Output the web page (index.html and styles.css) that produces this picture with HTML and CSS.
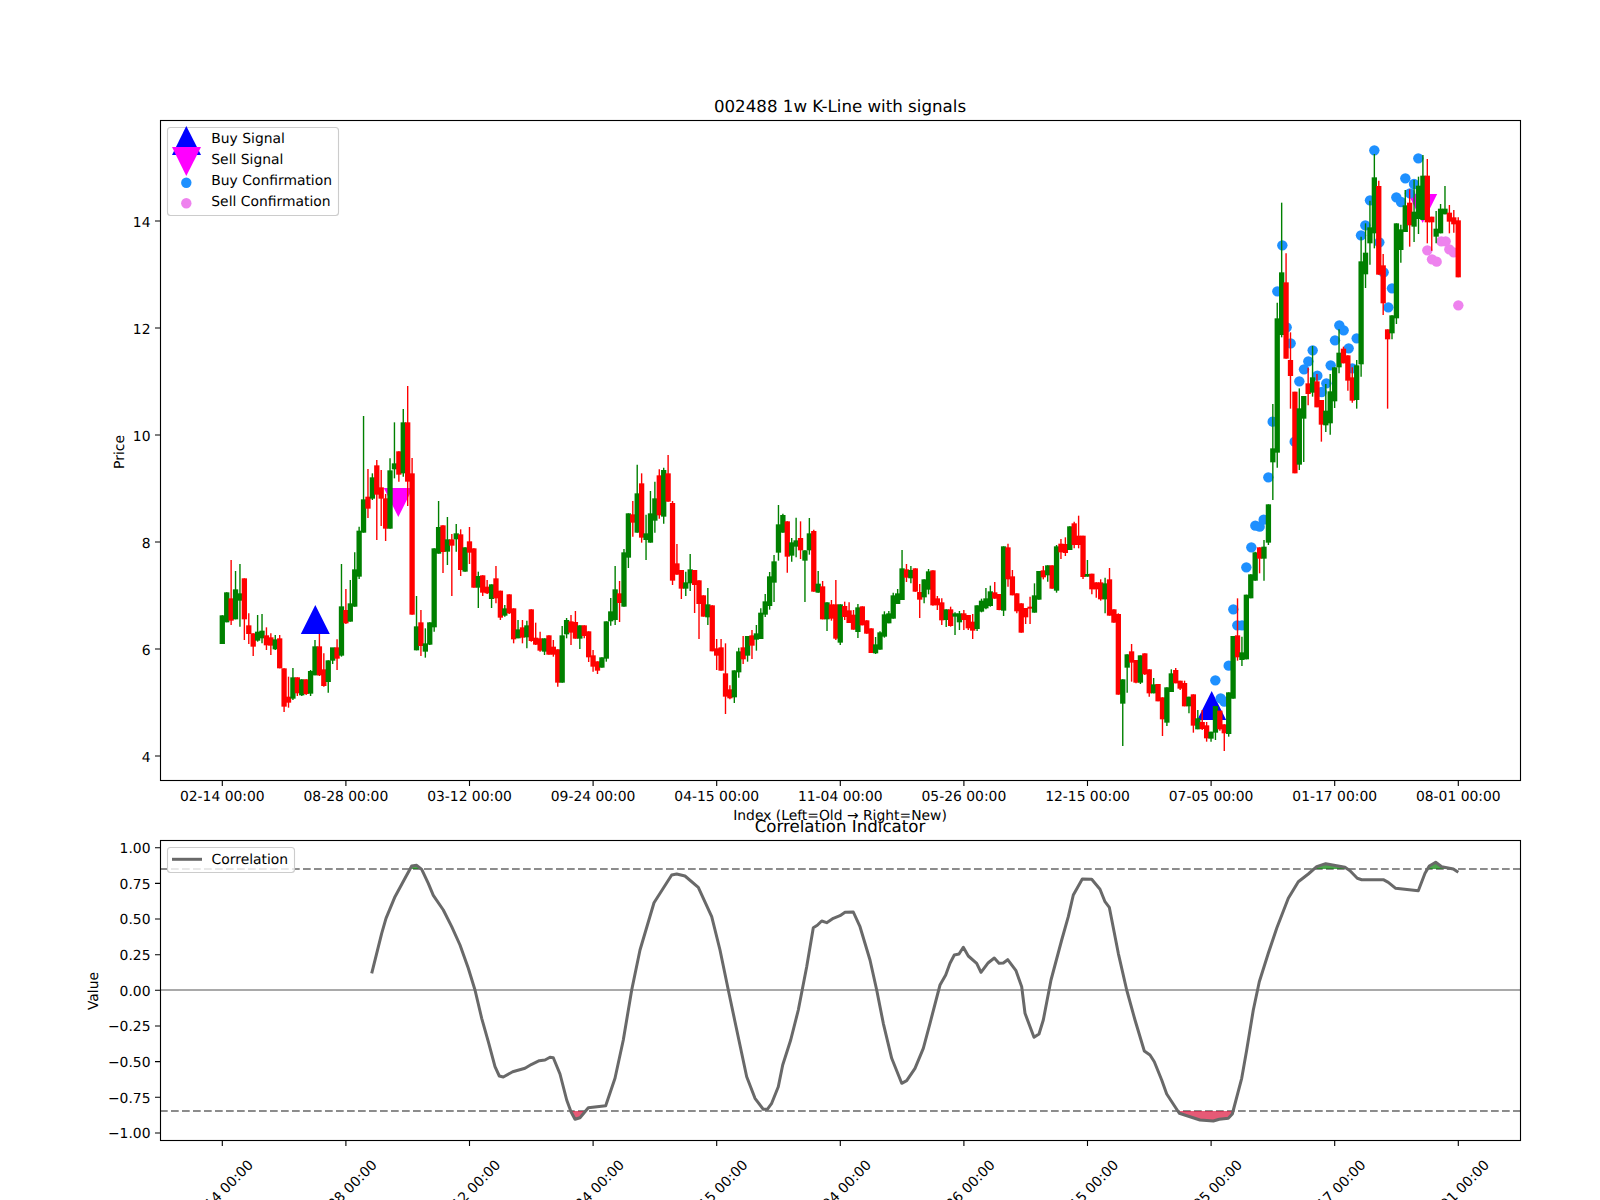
FILE: index.html
```html
<!DOCTYPE html>
<html lang="en">
<head>
<meta charset="utf-8">
<title>002488 1w K-Line with signals</title>
<link rel="stylesheet" href="styles.css">
</head>
<body>
<main class="figure">
<svg class="panel panel-price" viewBox="0 0 1600 820" xmlns="http://www.w3.org/2000/svg">
  <text class="title" x="840" y="112">002488 1w K-Line with signals</text>
  <g id="markers"></g>
  <g id="candles"></g>
  <rect class="spine" x="160.5" y="120.5" width="1360" height="660"/>
  <g class="ticks">
    <path d="M222.3 781v5M345.9 781v5M469.5 781v5M593.1 781v5M716.7 781v5M840.3 781v5M963.9 781v5M1087.5 781v5M1211.1 781v5M1334.7 781v5M1458.3 781v5"/>
    <path d="M160 221h-5M160 328h-5M160 435h-5M160 542h-5M160 649h-5M160 756h-5"/>
  </g>
  <g class="tick-x">
    <text x="222.3" y="801">02-14 00:00</text>
    <text x="345.9" y="801">08-28 00:00</text>
    <text x="469.5" y="801">03-12 00:00</text>
    <text x="593.1" y="801">09-24 00:00</text>
    <text x="716.7" y="801">04-15 00:00</text>
    <text x="840.3" y="801">11-04 00:00</text>
    <text x="963.9" y="801">05-26 00:00</text>
    <text x="1087.5" y="801">12-15 00:00</text>
    <text x="1211.1" y="801">07-05 00:00</text>
    <text x="1334.7" y="801">01-17 00:00</text>
    <text x="1458.3" y="801">08-01 00:00</text>
  </g>
  <g class="tick-y">
    <text x="150.5" y="227">14</text>
    <text x="150.5" y="334">12</text>
    <text x="150.5" y="441">10</text>
    <text x="150.5" y="548">8</text>
    <text x="150.5" y="655">6</text>
    <text x="150.5" y="762">4</text>
  </g>
  <text class="axis-label" x="840" y="820">Index (Left=Old → Right=New)</text>
  <text class="axis-label" transform="translate(124 452) rotate(-90)">Price</text>
  <g class="legend">
    <rect class="legend-box" x="167.5" y="127.5" width="171" height="88" rx="3"/>
    <polygon class="buy" points="186.3,126 201,155 172,155"/>
    <polygon class="sell" points="172,147 201,147 186.3,176"/>
    <circle class="buy-dot" cx="186.3" cy="182.7" r="5.2"/>
    <circle class="sell-dot" cx="186.3" cy="203.3" r="5.2"/>
    <text x="211.3" y="143.3">Buy Signal</text>
    <text x="211.3" y="164.3">Sell Signal</text>
    <text x="211.3" y="185.3">Buy Confirmation</text>
    <text x="211.3" y="206.3">Sell Confirmation</text>
  </g>
</svg>
<svg class="panel panel-corr" viewBox="0 820 1600 380" xmlns="http://www.w3.org/2000/svg">
  <text class="title" x="840" y="831.5">Correlation Indicator</text>
  <line class="threshold" x1="160" y1="869" x2="1520" y2="869"/>
  <line class="threshold" x1="160" y1="1111" x2="1520" y2="1111"/>
  <line class="zero" x1="160" y1="990" x2="1520" y2="990"/>
  <polygon class="fill-low" points="571,1111 575,1119.3 580,1117.7 585.5,1111"/>
  <polygon class="fill-low" points="1177,1111 1179.3,1113.3 1190,1116.7 1200,1120 1213.3,1121 1219.3,1119.3 1228.3,1118.3 1232.3,1114 1233,1111"/>
  <polygon class="fill-high" points="409,869 411.7,866 416.7,865.3 421.7,869"/>
  <polygon class="fill-high" points="1311,869 1316.7,866.7 1325.7,863.7 1345,867.3 1348,869"/>
  <polygon class="fill-high" points="1428,869 1429.3,866 1435.7,862.3 1441.7,866.7 1453,869"/>
  <polyline class="corr-line" points="371.7,973.3 376.7,953.3 381.7,933.3 386,918.3 395,896.7 405,878.3 411.7,866 416.7,865.3 421.7,869.3 428.3,883.3 433.3,895.3 443.3,910 451.7,926.7 460,945 468.3,968.3 475,990 481.7,1018.3 488.3,1041.7 495,1066.7 499.3,1076 503.3,1077 512.7,1071.7 525,1068.3 531.7,1064.3 539.3,1060.7 545,1060 550,1057.3 553.3,1057.7 560,1074 566.7,1100 571,1111.7 575,1119.3 580,1117.7 588.3,1107.7 605.7,1105.7 615,1078.3 623.3,1040 631.7,990 640,950 654,902.7 671.7,875 676.7,874 685,876 698.3,887.3 711.7,916.7 720,950 728.3,990 735,1021.7 746.7,1076.7 755,1098.3 763.3,1109.3 767.3,1109.3 771.7,1103.3 778.3,1086.7 782.7,1065 790.7,1040 798.3,1010 806.7,966.7 813.3,927.7 817.3,925.3 821.7,921 826.7,922.7 833.3,918.3 840,915.7 845,912.3 853.3,912 860,926.7 870,960 876.7,990 883.3,1023.3 891.7,1058.3 901.7,1083.3 906.7,1080.7 915,1068.3 923.3,1048.3 930,1023.3 940,985 945.7,975 950,963.3 954.3,955 959,954 963.3,947.3 968.3,956 976.7,963.3 981,972.3 988.3,962.7 994.3,958 999,963.3 1003.3,963 1007.7,959.7 1016,970.7 1021.7,986.7 1025,1013.3 1034,1037.3 1039,1034 1043.3,1020 1051,980 1061.7,940 1068.3,916.7 1073.3,895 1082.3,879 1091.7,879.3 1100,889.3 1105,901.7 1109.3,907.3 1118.3,953.3 1126.7,990 1135,1020 1144.3,1051 1150,1055 1154.3,1061.7 1161.7,1080 1166.7,1094 1179.3,1113.3 1190,1116.7 1200,1120 1213.3,1121 1219.3,1119.3 1228.3,1118.3 1232.3,1114 1241.7,1078.3 1246.7,1050 1253.3,1010 1259.3,981.7 1268.3,953.3 1276.7,928.3 1288.3,898.3 1298.3,881.7 1308.3,874 1316.7,866.7 1325.7,863.7 1345,867.3 1350,870.7 1357.3,878.3 1361.7,879.7 1383.3,879.7 1388.3,882.3 1395.7,888.3 1418.3,890.7 1425,873.3 1429.3,866 1435.7,862.3 1441.7,866.7 1453.3,869 1458.3,872.3"/>
  <rect class="spine" x="160.5" y="840.5" width="1360" height="300"/>
  <g class="ticks">
    <path d="M222.3 1141v5M345.9 1141v5M469.5 1141v5M593.1 1141v5M716.7 1141v5M840.3 1141v5M963.9 1141v5M1087.5 1141v5M1211.1 1141v5M1334.7 1141v5M1458.3 1141v5"/>
    <path d="M160 847.7h-5M160 883.4h-5M160 919h-5M160 954.7h-5M160 990.3h-5M160 1026h-5M160 1061.6h-5M160 1097.3h-5M160 1133h-5"/>
  </g>
  <g class="tick-x tick-rotated">
    <text transform="translate(221.3 1193) rotate(-45)">02-14 00:00</text>
    <text transform="translate(344.9 1193) rotate(-45)">08-28 00:00</text>
    <text transform="translate(468.5 1193) rotate(-45)">03-12 00:00</text>
    <text transform="translate(592.1 1193) rotate(-45)">09-24 00:00</text>
    <text transform="translate(715.7 1193) rotate(-45)">04-15 00:00</text>
    <text transform="translate(839.3 1193) rotate(-45)">11-04 00:00</text>
    <text transform="translate(962.9 1193) rotate(-45)">05-26 00:00</text>
    <text transform="translate(1086.5 1193) rotate(-45)">12-15 00:00</text>
    <text transform="translate(1210.1 1193) rotate(-45)">07-05 00:00</text>
    <text transform="translate(1333.7 1193) rotate(-45)">01-17 00:00</text>
    <text transform="translate(1457.3 1193) rotate(-45)">08-01 00:00</text>
  </g>
  <g class="tick-y">
    <text x="150.5" y="853">1.00</text>
    <text x="150.5" y="888.6">0.75</text>
    <text x="150.5" y="924.3">0.50</text>
    <text x="150.5" y="960">0.25</text>
    <text x="150.5" y="995.6">0.00</text>
    <text x="150.5" y="1031.2">−0.25</text>
    <text x="150.5" y="1066.9">−0.50</text>
    <text x="150.5" y="1102.6">−0.75</text>
    <text x="150.5" y="1138.2">−1.00</text>
  </g>
  <text class="axis-label" transform="translate(98 991) rotate(-90)">Value</text>
  <g class="legend">
    <rect class="legend-box" x="167.5" y="847.5" width="127" height="25" rx="3"/>
    <line class="corr-line" x1="172" y1="859.3" x2="202" y2="859.3"/>
    <text x="211.6" y="864.3">Correlation</text>
  </g>
</svg>
</main>
<script src="chart.js"></script>
</body>
</html>
```

FILE: styles.css
```css
html, body {
  margin: 0;
  padding: 0;
  background: #fff;
}

.figure {
  display: flex;
  flex-direction: column;
  width: 1600px;
  height: 1200px;
  overflow: hidden;
}

.panel {
  display: block;
  width: 1600px;
  flex: none;
}

.panel-price {
  height: 820px;
  overflow: visible;
  position: relative;
  z-index: 1;
}

.panel-corr {
  height: 380px;
  overflow: hidden;
}

text {
  font-family: "DejaVu Sans", sans-serif;
  font-size: 13.89px;
  fill: #000;
  text-rendering: geometricPrecision;
}

.title {
  font-size: 16.67px;
  text-anchor: middle;
}

.axis-label {
  text-anchor: middle;
}

.tick-x text {
  text-anchor: middle;
}

.tick-rotated text {
  dominant-baseline: central;
}

.tick-y text {
  text-anchor: end;
}

.spine {
  fill: none;
  stroke: #000;
  stroke-width: 1.11px;
}

.ticks path {
  fill: none;
  stroke: #000;
  stroke-width: 1.11px;
}

.legend-box {
  fill: #fff;
  fill-opacity: 0.8;
  stroke: #ccc;
  stroke-width: 1.11px;
}

.buy { fill: #0000ff; }
.sell { fill: #ff00ff; }
.buy-dot { fill: #1e90ff; }
.sell-dot { fill: #ee82ee; }

.wick-up { stroke: #008000; stroke-width: 1.4px; }
.wick-down { stroke: #ff0000; stroke-width: 1.4px; }
.body-up { fill: #008000; }
.body-down { fill: #ff0000; }

.threshold {
  stroke: #8c8c8c;
  stroke-width: 2.08px;
  stroke-dasharray: 7.7 3.3;
}

.zero {
  stroke: #a9a9a9;
  stroke-width: 2.08px;
}

.corr-line {
  fill: none;
  stroke: #696969;
  stroke-width: 3px;
  stroke-linejoin: round;
}

.fill-low { fill: #dc143c; fill-opacity: 0.7; }
.fill-high { fill: #008000; fill-opacity: 0.7; }
```

FILE: chart.js
```javascript
// Values are read in thirds of a pixel, relative to each block's base line.
// Row: colour, body top, body bottom, wick top, wick bottom.
var BLOCKS = [
  { start: 0, base: 390, rows: "g676,762,676,762 g607,697,607,697 r625,692,510,705 g598,688,543,688 g610,632,522,710 r565,688,565,750 r706,732,670,762 r730,770,730,798 g725,752,675,755 g722,745,672,760 r736,766,712,780 r742,767,730,795 g748,778,735,780 r745,835,735,835 r835,950,835,966 r920,938,860,953 g862,926,834,930 r862,910,862,918 g868,916,868,918 r868,912,868,915 g843,911,840,918 g769,856,750,856 r769,856,732,858 r838,888,790,890 g811,876,811,908 g772,812,790,822 r772,806,748,840 g649,797,522,800 r660,700,597,702 g640,695,570,695 g538,650,487,650 g422,560,410,567 g328,428,78,428 r320,356,237,384 g262,326,250,330 r226,314,210,450 r292,326,240,408 r325,416,312,453 g241,416,205,416 g220,238,97,265 r184,254,184,275 g97,250,57,260 r97,275,-12,348 r250,674,204,674 g709,781,618,781 r697,768,660,798 g760,785,715,803 g697,764,697,765 g475,712,475,725 g411,491,333,491 r406,486,406,549 g448,485,381,525 r448,467,432,618 g430,448,402,485 r433,540,418,558 g472,545,472,545 r454,488,411,522 r475,593,475,593 g558,593,545,654 r556,608,556,618 r590,610,570,612 g583,627,583,654 r565,625,528,640 r602,683,602,690 g655,677,645,680 r613,670,613,672 r655,748,655,760 g718,745,690,745 r712,743,690,760 g706,742,692,775 r658,753,658,755 r743,764,698,765 r745,782,725,785 g745,785,745,795" },
  { start: 74, base: 420, rows: "r646,704,646,704 r680,704,660,710 r688,788,688,800 g646,788,618,788 g600,643,594,655 r604,638,585,675 r606,656,573,656 g616,656,616,687 r616,648,616,655 r634,712,634,726 r706,740,690,755 r724,752,724,762 g712,743,712,743 g604,716,604,725 g574,604,534,617 g508,600,438,615 r520,549,483,606 g397,560,387,560 g280,413,280,444 r283,308,243,350 g220,338,134,338 r190,353,160,368 g340,360,284,420 g280,368,213,368 g235,302,185,338 r166,286,148,296 g150,290,143,311 r160,245,105,245 r249,482,243,495 r430,464,372,464 r450,506,450,537 g487,506,455,528 g448,490,402,513 r450,495,450,579 r481,552,481,657 r526,590,526,590 g553,592,504,615 r556,694,556,694 r685,707,657,750 r682,752,657,752 r760,830,670,882 r808,835,796,838 g751,832,751,849 g694,757,683,773 r682,718,648,732 g648,707,648,725 r646,677,630,717 g640,659,615,692 g578,657,565,657 g544,584,522,591 g469,558,456,569 g424,488,405,546 g313,398,255,422 g285,338,281,338 r304,410,304,458 g367,407,354,425 g361,380,293,412 r354,391,304,417 g391,422,391,546 g340,391,294,404 r333,515,329,515 g491,518,453,518 r499,598,483,598 g547,598,547,633 r553,596,540,602 r553,656,480,660 g553,668,553,675 r558,591,545,600 r571,609,547,609 r584,629,570,629 g562,636,552,654 r559,616,559,616 r601,641,601,641 r625,699,625,699 g673,700,651,702 g637,689,634,689 g583,650,574,653 g580,610,573,610 g526,596,518,596 g520,552,507,552 g445,540,390,540 r448,473,432,486 g450,475,438,490 r445,515,445,515 r516,539,492,594 g478,532,478,550 g454,509,447,523 r451,556,451,557 r535,556,528,570 r547,601,535,615 g568,600,568,621" },
  { start: 165, base: 450, rows: "r478,528,470,530 g490,500,487,555 g490,517,483,540 r490,510,480,540 r495,535,495,540 r515,542,492,567 g466,537,466,543 g452,485,446,487 g445,475,414,478 g424,468,407,470 r427,446,396,446 r432,480,432,481 g289,482,289,498 r292,388,281,410 r379,436,360,436 r430,484,430,490 r460,548,460,548 r474,502,474,522 r470,476,440,522 g436,488,400,488 g363,449,363,449 r361,382,348,388 g346,376,346,395 r346,416,346,416 g289,422,285,428 r281,307,267,327 r282,309,262,318 g229,300,229,300 r220,285,215,295 r257,285,197,295 r257,381,257,387 g372,380,330,380 r371,418,371,433 r397,418,397,443 r397,448,388,452 g400,448,383,490 r388,497,354,497 r478,518,478,518 r492,734,490,734 g688,761,688,888 g613,653,613,728 r604,638,582,695 r630,698,630,700 g616,698,616,702 r610,673,610,675 r658,730,658,740 g703,730,684,730 r702,754,702,754 r742,808,742,858 g712,818,712,828 g670,726,658,726 r660,700,654,700 r692,716,692,720 r699,769,692,769 g740,769,740,790 r733,827,733,848 g805,838,780,838 r816,837,780,840 r826,865,816,875 g845,866,845,875 g768,848,768,870 r782,838,782,842 r823,850,823,903 g727,852,727,860 g558,746,558,746 r556,622,445,632 g607,630,560,648 g434,628,434,628 g373,445,373,445 g307,392,305,392 r292,326,292,370 g290,326,270,392 g163,278,163,285" },
  { start: 238, base: 130, rows: "g955,997,822,1110 g565,968,518,1013 g427,615,218,622 r457,686,370,686 r690,738,607,836 r785,1030,785,1030 g835,1004,775,1020 g798,866,798,996 r760,792,713,826 g742,788,648,800 r754,832,732,832 r810,884,810,935 g842,886,762,906 g784,880,732,914 g712,814,712,834 g668,712,598,730 r656,700,650,700 r676,752,676,782 r742,812,712,818 g706,810,690,836 g394,703,320,740 g368,433,280,474 g292,340,212,404 g142,310,72,355 r168,434,152,434 r406,520,372,555 r598,628,598,836 g556,610,556,628 g280,565,280,582 g298,360,284,398 g226,306,180,306 r218,286,178,350 g245,290,150,336 g167,267,140,312 g137,270,75,270 r137,277,87,340 r260,277,260,362 g296,320,243,340 g236,310,222,310 g236,253,168,253 r248,275,225,310 r262,283,240,308 r271,442,262,442" }
];

// Dot positions, thirds of a pixel from the given origin.
var DOTS = [
  { cls: "buy-dot", x0: 950, y0: 450, pts: [[796,691],[812,745],[823,755],[836,647],[850,478],[862,526],[876,526],[889,352],[904,292],[916,227],[929,230],[941,209]] },
  { cls: "buy-dot", x0: 1220, y0: 130, pts: [[463,61],[595,85],[556,145],[582,162],[570,190],[529,202],[543,216],[450,211],[187,346],[172,484],[158,875],[145,1042],[200,592],[212,640],[224,935],[238,754],[252,718],[265,694],[278,661],[292,737],[305,786],[319,760],[332,706],[345,631],[358,586],[371,601],[386,655],[397,715],[410,625],[423,316],[436,286],[478,337],[491,427],[516,475],[505,532]] },
  { cls: "sell-dot", x0: 1220, y0: 130, pts: [[622,361],[636,388],[650,395],[664,334],[677,334],[688,358],[701,367],[715,526]] }
];

var TRIANGLES = [
  { cls: "buy", x: 315.3, tip: 605, edge: 634 },
  { cls: "buy", x: 1211.7, tip: 691, edge: 720 },
  { cls: "sell", x: 398.3, tip: 517, edge: 488 },
  { cls: "sell", x: 1422.7, tip: 223, edge: 194 }
];

var NS = "http://www.w3.org/2000/svg";
var X0 = 222.3, STEP = 4.414, BODY = 5.3;

function el(parent, name, attrs) {
  var node = document.createElementNS(NS, name);
  for (var k in attrs) node.setAttribute(k, attrs[k]);
  parent.appendChild(node);
  return node;
}

var markers = document.getElementById("markers");
TRIANGLES.forEach(function (t) {
  el(markers, "polygon", {
    "class": t.cls,
    points: t.x + "," + t.tip + " " + (t.x - 14.5) + "," + t.edge + " " + (t.x + 14.5) + "," + t.edge
  });
});
DOTS.forEach(function (set) {
  set.pts.forEach(function (p) {
    el(markers, "circle", { "class": set.cls, cx: set.x0 + p[0] / 3, cy: set.y0 + p[1] / 3, r: 5.2 });
  });
});

var candles = document.getElementById("candles");
BLOCKS.forEach(function (block) {
  block.rows.split(" ").forEach(function (row, n) {
    var up = row.charAt(0) === "g";
    var v = row.slice(1).split(",").map(function (s) { return block.base + Number(s) / 3; });
    var x = X0 + STEP * (block.start + n);
    el(candles, "line", { "class": up ? "wick-up" : "wick-down", x1: x, x2: x, y1: v[2], y2: v[3] });
    el(candles, "rect", { "class": up ? "body-up" : "body-down", x: x - BODY / 2, y: v[0], width: BODY, height: v[1] - v[0] });
  });
});
```
